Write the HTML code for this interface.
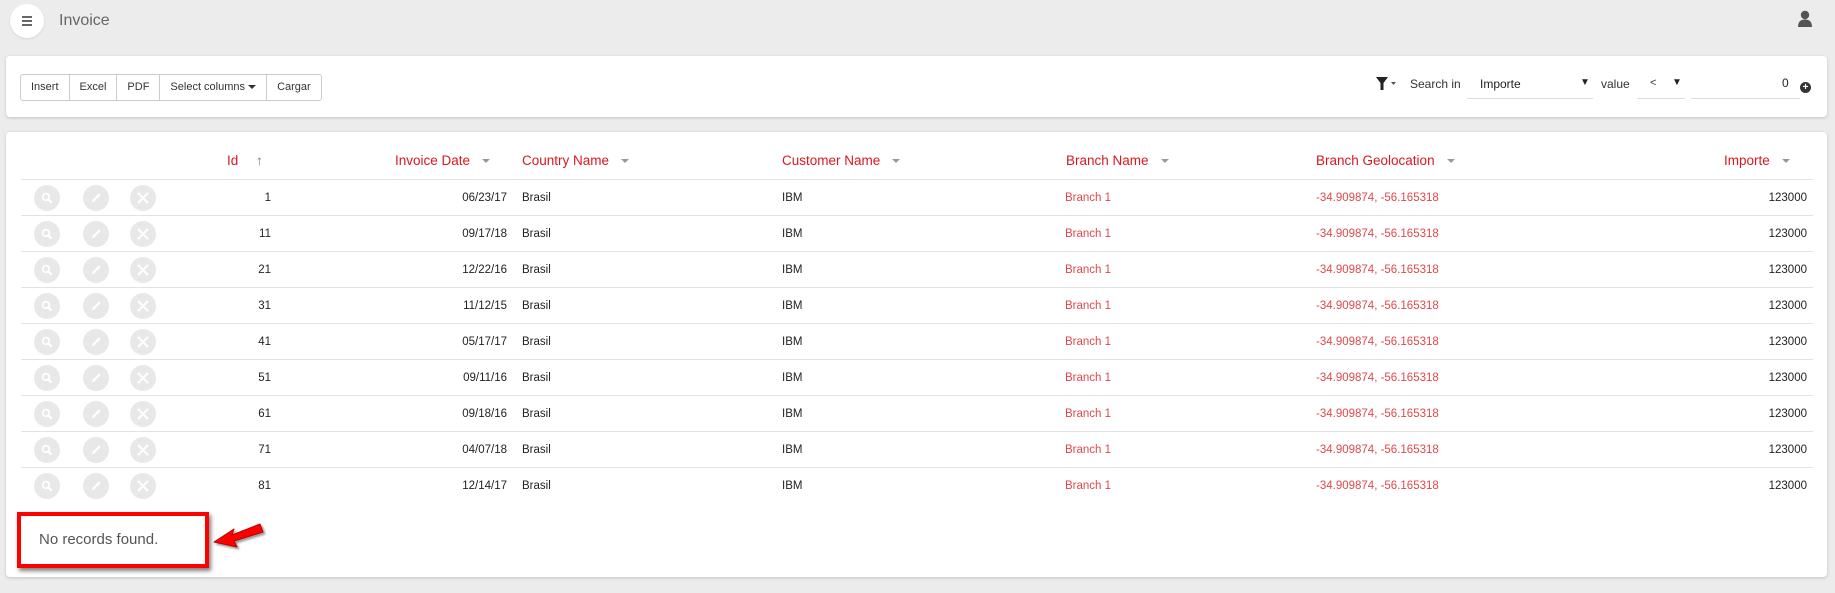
<!DOCTYPE html>
<html><head><meta charset="utf-8"><style>
*{box-sizing:border-box;margin:0;padding:0}
body{width:1835px;height:593px;background:#ececec;font-family:"Liberation Sans",sans-serif;position:relative;overflow:hidden;color:#222}
.abs{position:absolute}
.card{position:absolute;background:#fff;border-radius:4px;box-shadow:0 1px 3px rgba(0,0,0,.18)}
.btns{position:absolute;left:20px;top:74px;height:27px;display:flex;border:1px solid #ccc;border-radius:3px;font-size:11px}
.btns div{padding:0 10px;line-height:25px;border-right:1px solid #ccc;color:#333}
.btns div:last-child{border-right:none}
.th{position:absolute;top:153px;font-size:13.5px;color:#d81820}
.car{display:inline-block;width:0;height:0;border-left:4px solid transparent;border-right:4px solid transparent;border-top:4px solid #999;vertical-align:middle;margin-left:12px}
.row{position:absolute;left:21px;width:1792px;height:36px;border-top:1px solid #e2e2e2;font-size:11.5px}
.row span{position:absolute;top:12px}
.ic{position:absolute;top:5px;width:26px;height:26px;border-radius:50%;background:#e8e8e8}
.ic svg{position:absolute;left:0;top:0}
.r{color:#e0474c}
</style></head><body>
<svg width="0" height="0" style="position:absolute"><defs>
<g id="mag"><circle cx="12" cy="12" r="3.3" fill="none" stroke="#fff" stroke-width="1.8"/><path d="M14.3 14.3L17 17" stroke="#fff" stroke-width="2.2" stroke-linecap="round"/></g>
<g id="pen"><path d="M9 17.5L9.6 14.8L16 8.4L17.6 10L11.2 16.4Z" fill="#fff"/></g>
<g id="x"><path d="M8.5 8.5L17.5 17.5M17.5 8.5L8.5 17.5" stroke="#fff" stroke-width="2" stroke-linecap="round"/></g>
</defs></svg>
<div class="abs" style="left:10px;top:4px;width:34px;height:34px;border-radius:50%;background:#fff;box-shadow:0 1px 2px rgba(0,0,0,.1)"></div>
<div class="abs" style="left:22px;top:16px;width:10px;height:2px;background:#666;box-shadow:0 4px 0 #666,0 8px 0 #666"></div>
<div class="abs" style="left:59px;top:12px;font-size:16px;color:#666">Invoice</div>
<svg class="abs" style="left:1797px;top:10px" width="16" height="18" viewBox="0 0 16 18"><circle cx="8" cy="5" r="4.2" fill="#555"/><path d="M1 17 Q1 9.5 8 9.5 Q15 9.5 15 17Z" fill="#555"/></svg>

<div class="card" style="left:6px;top:56px;width:1821px;height:61px"></div>
<div class="btns"><div>Insert</div><div>Excel</div><div>PDF</div><div>Select columns <span style="display:inline-block;border-left:4px solid transparent;border-right:4px solid transparent;border-top:4px solid #333;vertical-align:middle"></span></div><div>Cargar</div></div>
<svg class="abs" style="left:1376px;top:77px" width="22" height="14" viewBox="0 0 22 14"><path d="M0 0H12L7.5 6V13H4.5V6Z" fill="#222"/><path d="M15 5H20L17.5 8Z" fill="#555"/></svg>
<div class="abs" style="left:1410px;top:77px;font-size:12px;color:#333">Search in</div>
<div class="abs" style="left:1467px;top:68px;width:126px;height:31px;border-bottom:1px solid #ddd"></div>
<div class="abs" style="left:1480px;top:77px;font-size:12px;color:#222">Importe</div>
<div class="abs" style="left:1580px;top:77px;font-size:10px;color:#222">▼</div>
<div class="abs" style="left:1601px;top:77px;font-size:12px;color:#333">value</div>
<div class="abs" style="left:1637px;top:68px;width:48px;height:31px;border-bottom:1px solid #ddd"></div>
<div class="abs" style="left:1650px;top:77px;font-size:11px;color:#333">&lt;</div>
<div class="abs" style="left:1672px;top:77px;font-size:10px;color:#222">▼</div>
<div class="abs" style="left:1691px;top:68px;width:109px;height:31px;border-bottom:1px solid #ddd"></div>
<div class="abs" style="left:1782px;top:76px;font-size:12px;color:#222">0</div>
<div class="abs" style="left:1800px;top:82px;width:11px;height:11px;border-radius:50%;background:#333;color:#fff;font-size:10px;line-height:11px;text-align:center;font-weight:bold">+</div>

<div class="card" style="left:6px;top:132px;width:1821px;height:445px"></div>
<div class="th" style="left:227px">Id <span style="color:#777;margin-left:14px">↑</span></div>
<div class="th" style="left:395px">Invoice Date<span class="car"></span></div>
<div class="th" style="left:522px">Country Name<span class="car"></span></div>
<div class="th" style="left:782px">Customer Name<span class="car"></span></div>
<div class="th" style="left:1066px">Branch Name<span class="car"></span></div>
<div class="th" style="left:1316px">Branch Geolocation<span class="car"></span></div>
<div class="th" style="left:1724px">Importe<span class="car"></span></div>

<div class="row" style="top:179px"><div class="ic" style="left:13px"><svg width="26" height="26"><use href="#mag"/></svg></div><div class="ic" style="left:62px"><svg width="26" height="26"><use href="#pen"/></svg></div><div class="ic" style="left:109px"><svg width="26" height="26"><use href="#x"/></svg></div><span style="right:1542px">1</span><span style="right:1306px">06/23/17</span><span style="left:501px">Brasil</span><span style="left:761px">IBM</span><span class="r" style="left:1044px">Branch 1</span><span class="r" style="left:1295px">-34.909874, -56.165318</span><span style="right:6px">123000</span></div>
<div class="row" style="top:215px"><div class="ic" style="left:13px"><svg width="26" height="26"><use href="#mag"/></svg></div><div class="ic" style="left:62px"><svg width="26" height="26"><use href="#pen"/></svg></div><div class="ic" style="left:109px"><svg width="26" height="26"><use href="#x"/></svg></div><span style="right:1542px">11</span><span style="right:1306px">09/17/18</span><span style="left:501px">Brasil</span><span style="left:761px">IBM</span><span class="r" style="left:1044px">Branch 1</span><span class="r" style="left:1295px">-34.909874, -56.165318</span><span style="right:6px">123000</span></div>
<div class="row" style="top:251px"><div class="ic" style="left:13px"><svg width="26" height="26"><use href="#mag"/></svg></div><div class="ic" style="left:62px"><svg width="26" height="26"><use href="#pen"/></svg></div><div class="ic" style="left:109px"><svg width="26" height="26"><use href="#x"/></svg></div><span style="right:1542px">21</span><span style="right:1306px">12/22/16</span><span style="left:501px">Brasil</span><span style="left:761px">IBM</span><span class="r" style="left:1044px">Branch 1</span><span class="r" style="left:1295px">-34.909874, -56.165318</span><span style="right:6px">123000</span></div>
<div class="row" style="top:287px"><div class="ic" style="left:13px"><svg width="26" height="26"><use href="#mag"/></svg></div><div class="ic" style="left:62px"><svg width="26" height="26"><use href="#pen"/></svg></div><div class="ic" style="left:109px"><svg width="26" height="26"><use href="#x"/></svg></div><span style="right:1542px">31</span><span style="right:1306px">11/12/15</span><span style="left:501px">Brasil</span><span style="left:761px">IBM</span><span class="r" style="left:1044px">Branch 1</span><span class="r" style="left:1295px">-34.909874, -56.165318</span><span style="right:6px">123000</span></div>
<div class="row" style="top:323px"><div class="ic" style="left:13px"><svg width="26" height="26"><use href="#mag"/></svg></div><div class="ic" style="left:62px"><svg width="26" height="26"><use href="#pen"/></svg></div><div class="ic" style="left:109px"><svg width="26" height="26"><use href="#x"/></svg></div><span style="right:1542px">41</span><span style="right:1306px">05/17/17</span><span style="left:501px">Brasil</span><span style="left:761px">IBM</span><span class="r" style="left:1044px">Branch 1</span><span class="r" style="left:1295px">-34.909874, -56.165318</span><span style="right:6px">123000</span></div>
<div class="row" style="top:359px"><div class="ic" style="left:13px"><svg width="26" height="26"><use href="#mag"/></svg></div><div class="ic" style="left:62px"><svg width="26" height="26"><use href="#pen"/></svg></div><div class="ic" style="left:109px"><svg width="26" height="26"><use href="#x"/></svg></div><span style="right:1542px">51</span><span style="right:1306px">09/11/16</span><span style="left:501px">Brasil</span><span style="left:761px">IBM</span><span class="r" style="left:1044px">Branch 1</span><span class="r" style="left:1295px">-34.909874, -56.165318</span><span style="right:6px">123000</span></div>
<div class="row" style="top:395px"><div class="ic" style="left:13px"><svg width="26" height="26"><use href="#mag"/></svg></div><div class="ic" style="left:62px"><svg width="26" height="26"><use href="#pen"/></svg></div><div class="ic" style="left:109px"><svg width="26" height="26"><use href="#x"/></svg></div><span style="right:1542px">61</span><span style="right:1306px">09/18/16</span><span style="left:501px">Brasil</span><span style="left:761px">IBM</span><span class="r" style="left:1044px">Branch 1</span><span class="r" style="left:1295px">-34.909874, -56.165318</span><span style="right:6px">123000</span></div>
<div class="row" style="top:431px"><div class="ic" style="left:13px"><svg width="26" height="26"><use href="#mag"/></svg></div><div class="ic" style="left:62px"><svg width="26" height="26"><use href="#pen"/></svg></div><div class="ic" style="left:109px"><svg width="26" height="26"><use href="#x"/></svg></div><span style="right:1542px">71</span><span style="right:1306px">04/07/18</span><span style="left:501px">Brasil</span><span style="left:761px">IBM</span><span class="r" style="left:1044px">Branch 1</span><span class="r" style="left:1295px">-34.909874, -56.165318</span><span style="right:6px">123000</span></div>
<div class="row" style="top:467px"><div class="ic" style="left:13px"><svg width="26" height="26"><use href="#mag"/></svg></div><div class="ic" style="left:62px"><svg width="26" height="26"><use href="#pen"/></svg></div><div class="ic" style="left:109px"><svg width="26" height="26"><use href="#x"/></svg></div><span style="right:1542px">81</span><span style="right:1306px">12/14/17</span><span style="left:501px">Brasil</span><span style="left:761px">IBM</span><span class="r" style="left:1044px">Branch 1</span><span class="r" style="left:1295px">-34.909874, -56.165318</span><span style="right:6px">123000</span></div>

<div class="abs" style="left:17px;top:512px;width:192px;height:56px;border:4px solid #f00;box-shadow:2px 3px 4px rgba(0,0,0,.5)"></div>
<div class="abs" style="left:39px;top:531px;font-size:15px;color:#555">No records found.</div>
<svg class="abs" style="left:210px;top:520px" width="60" height="32" viewBox="0 0 60 32"><path d="M50 4 L22 15 L24 9 L4 22 L27 27 L24 21 L53 12 Z" fill="#f00" stroke="#b00" stroke-width="1" stroke-linejoin="round" style="filter:drop-shadow(2px 2px 1px rgba(0,0,0,.4))"/></svg>
</body></html>
